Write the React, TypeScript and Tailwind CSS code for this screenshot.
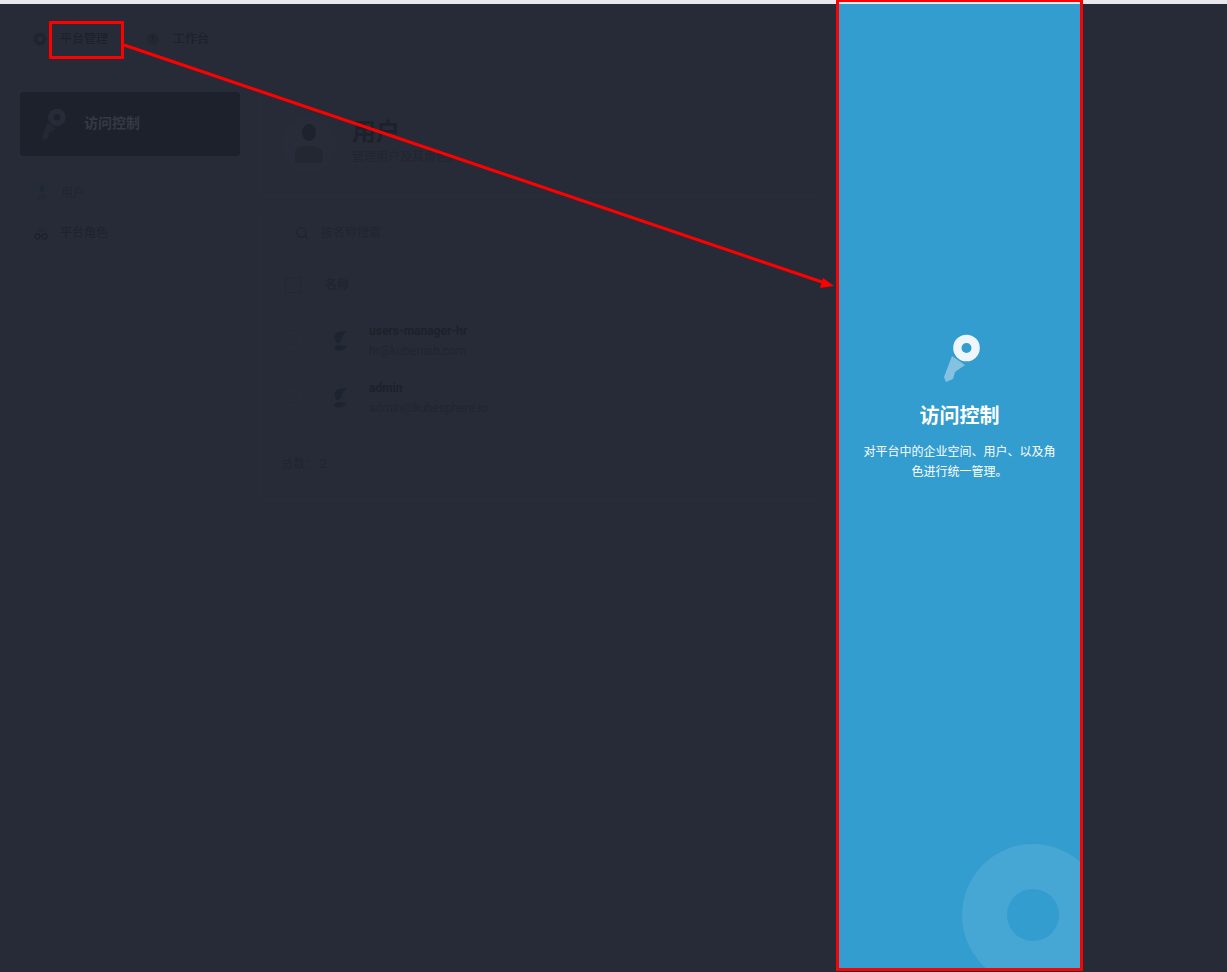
import { Search } from "lucide-react";

const FONT = { fontFamily: '"Roboto", "Noto Sans CJK SC", sans-serif' };

function Gear({ className }: { className?: string }) {
  return (
    <svg viewBox="0 0 14 14" className={className} fill="none">
      <circle cx="7" cy="7" r="3.8" stroke="currentColor" strokeWidth="1.500" />
      <circle cx="7" cy="7" r="5.700" stroke="currentColor" strokeWidth="1.700" strokeDasharray="1.700 1.280" />
    </svg>
  );
}

function Compass({ className }: { className?: string }) {
  return (
    <svg viewBox="0 0 14 14" className={className}>
      <circle cx="7" cy="7" r="6" fill="#23272f" />
      <path d="M5.500 4.500h3L7 9z" fill="#1c212b" />
    </svg>
  );
}

function KeyIcon({ ring, hole, handle, className }: { ring: string; hole: string; handle: string; className?: string }) {
  return (
    <svg viewBox="0 0 36 48" className={className}>
      <path d="M8 22 L0 43 L2 48 L9 45 L11 38 L21 31 Z" fill={handle} />
      <circle cx="22.500" cy="14" r="13.300" fill={ring} />
      <circle cx="22.500" cy="14" r="5" fill={hole} />
    </svg>
  );
}

function SidebarPerson({ className }: { className?: string }) {
  return (
    <svg viewBox="0 0 12 14" className={className}>
      <ellipse cx="6" cy="3" rx="2.300" ry="3" fill="#1b2a33" />
      <path d="M1.500 13.500v-3c0-1.700 2-2.800 4.500-2.800s4.500 1.100 4.500 2.800v3z" fill="#222a35" />
    </svg>
  );
}

function RoleGlyph({ className }: { className?: string }) {
  return (
    <svg viewBox="0 0 14 14" className={className}>
      <path d="M3.500 5 4.500 1.500h5L10.500 5z" fill="#232833" />
      <rect x="1.500" y="5" width="11" height="1.300" fill="#232833" />
      <circle cx="3.400" cy="10.300" r="2.500" fill="none" stroke="#1c212b" strokeWidth="1.200" />
      <circle cx="10.600" cy="10.300" r="2.500" fill="none" stroke="#1c212b" strokeWidth="1.200" />
      <path d="M5.900 10h2.200" stroke="#1c212b" strokeWidth="1" />
    </svg>
  );
}

function HeaderAvatar() {
  return (
    <div className="flex h-14 w-14 shrink-0 items-center justify-center rounded-full bg-[#282c38]">
      <svg viewBox="0 0 28 39" className="h-[39px] w-7">
        <ellipse cx="14" cy="8.500" rx="7" ry="8.500" fill="#1e222c" />
        <path d="M0 39V28c0-3 6-6 14-6s14 3 14 6v11z" fill="#232731" />
      </svg>
    </div>
  );
}

function BirdAvatar() {
  return (
    <svg viewBox="0 0 14 20" className="h-5 w-3.5 shrink-0">
      <path d="M.5 6.500C.5 2.500 4 .5 7.500.5H14C10.500 2 8.500 4 7.500 7.500c-.5 2.500-1.500 4.500-3.500 4.500C2 12 .5 10 .5 6.500z" fill="#1c2430" />
      <path d="M.5 17c.5-2.500 3.500-3.500 6.500-2.800 2 .4 3.500.8 5.500.4-1 2.500-3 4.600-6 4.900-3 .3-6-.5-6-2.500z" fill="#1c2430" />
    </svg>
  );
}

function UserRow({ name, email }: { name: string; email: string }) {
  return (
    <div className="flex h-[57px] items-center pl-6">
      <span className="h-4 w-4 shrink-0 border border-[#292d39]" />
      <span className="ml-[33px]">
        <BirdAvatar />
      </span>
      <div className="ml-[21px] flex flex-col">
        <span className="text-xs leading-5 font-bold text-[#1c212b]">{name}</span>
        <span className="text-xs leading-5 text-[#21252f]">{email}</span>
      </div>
    </div>
  );
}

function Page() {
  return (
    <div className="h-[972px] overflow-hidden border-t-4 border-[#e9e9ed] bg-[#272b37]">
      <nav className="flex h-[68px] items-center pt-[1px] pl-[33px] text-xs font-medium text-[#1c212b]">
        <Gear className="h-3.5 w-3.5 text-[#1c212b]" />
        <span className="ml-[13px]">平台管理</span>
        <Compass className="ml-[38px] h-3.5 w-3.5" />
        <span className="ml-[13px]">工作台</span>
      </nav>
      <div className="flex items-start pt-5">
        <aside className="w-[260px] shrink-0 pl-5">
          <div className="flex h-16 w-[220px] items-center rounded-sm bg-[#1c212b] pl-[22px]">
            <KeyIcon ring="#272b37" hole="#1c212b" handle="#242834" className="h-8 w-6" />
            <span className="ml-[18px] pb-[2px] text-sm font-bold text-[#353944]">访问控制</span>
          </div>
          <ul className="mt-[17px] flex flex-col text-xs">
            <li className="flex h-10 items-center pl-4">
              <SidebarPerson className="h-3.5 w-3" />
              <span className="ml-[13px] text-[#1f2732]">用户</span>
            </li>
            <li className="flex h-10 items-center pl-[14px]">
              <RoleGlyph className="h-3.5 w-3.5" />
              <span className="ml-3 text-[#1d222c]">平台角色</span>
            </li>
          </ul>
        </aside>
        <main className="w-[560px]">
          <header className="flex h-[104px] items-center rounded-sm border-b border-l border-[#292d39] pl-5">
            <HeaderAvatar />
            <div className="ml-[15px] flex flex-col pb-[6px]">
              <h1 className="text-2xl leading-[30px] font-bold text-[#1c212b]">用户</h1>
              <p className="mt-[2px] text-xs leading-4 text-[#21252f]">管理用户及其角色。</p>
            </div>
          </header>
          <section className="mt-3 rounded-sm border-b border-l border-[#292d39]">
            <div className="flex h-[50px] items-center pl-[34px] text-xs text-[#21252f]">
              <Search className="h-3.5 w-3.5 text-[#1f232d]" strokeWidth={2} />
              <span className="ml-3">按名称搜索</span>
            </div>
            <div className="flex h-[54px] items-center pl-6 text-xs font-bold text-[#21252f]">
              <span className="h-4 w-4 border border-[#23272f]" />
              <span className="ml-[24px]">名称</span>
            </div>
            <UserRow name="users-manager-hr" email="hr@kubemsb.com" />
            <UserRow name="admin" email="admin@kubesphere.io" />
            <div className="flex h-[74px] items-center pt-[2px] pl-5 text-xs text-[#21252f]">总数： 2</div>
          </section>
        </main>
      </div>
    </div>
  );
}

function TourPanel() {
  return (
    <div className="absolute top-0 left-[836px] h-[971px] w-[247px] border-[3px] border-t-2 border-[#ff0000]">
      <div className="relative flex h-full flex-col items-center overflow-hidden border-t-2 border-[#e9e9ed] bg-[#339dd0] px-6 pt-[330px] text-center text-white">
        <KeyIcon ring="#eef6fb" hole="#339dd0" handle="#85c1e1" className="mr-[-5px] h-12 w-9" />
        <h2 className="mt-5 text-xl leading-7 font-bold">访问控制</h2>
        <p className="mt-3 text-xs leading-5">对平台中的企业空间、用户、以及角色进行统一管理。</p>
        <span className="absolute top-[840px] left-[123px] flex h-[142px] w-[142px] items-center justify-center rounded-full bg-[#46a6d4]">
          <span className="h-[52px] w-[52px] rounded-full bg-[#339dd0]" />
        </span>
      </div>
    </div>
  );
}

export default function App() {
  return (
    <div className="relative h-[972px] w-full overflow-hidden" style={FONT}>
      <Page />
      <TourPanel />
      {/* red annotation: box round the nav item, arrow pointing at the panel */}
      <span className="absolute top-[21px] left-[49px] h-[38px] w-[75px] rounded-[1px] border-[3px] border-[#ff0000]" />
      <svg className="pointer-events-none absolute inset-0 h-[972px] w-[1227px]" viewBox="0 0 1227 972">
        <line x1="124" y1="45" x2="822" y2="282" stroke="#ff0000" strokeWidth="3" />
        <path d="M834 286 L820 288 L823 278 Z" fill="#ff0000" />
      </svg>
    </div>
  );
}
